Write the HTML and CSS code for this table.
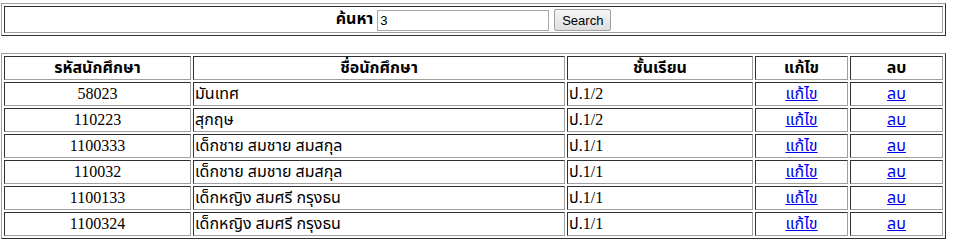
FILE: index.html
```html
<!DOCTYPE html>
<html lang="th">

<head>
  <meta charset="UTF-8">
  <title>ข้อมูลนักศึกษา</title>
  <link rel="stylesheet" href="styles.css">
</head>

<body>
  <form class="search-form">
    <table class="grid search-table">
      <tr>
        <td class="search-cell">
          <b>ค้นหา</b>
          <input type="text" class="search-input" value="3">
          <button type="button" class="search-btn">Search</button>
        </td>
      </tr>
    </table>
  </form>

  <table class="grid student-table">
    <tr>
      <th class="col-id">รหัสนักศึกษา</th>
      <th class="col-name">ชื่อนักศึกษา</th>
      <th class="col-class">ชั้นเรียน</th>
      <th class="col-act">แก้ไข</th>
      <th class="col-act">ลบ</th>
    </tr>
    <tr>
      <td class="center">58023</td>
      <td>มันเทศ</td>
      <td>ป.1/2</td>
      <td class="center"><a href="#">แก้ไข</a></td>
      <td class="center"><a href="#">ลบ</a></td>
    </tr>
    <tr>
      <td class="center">110223</td>
      <td>สุกฤษ</td>
      <td>ป.1/2</td>
      <td class="center"><a href="#">แก้ไข</a></td>
      <td class="center"><a href="#">ลบ</a></td>
    </tr>
    <tr>
      <td class="center">1100333</td>
      <td>เด็กชาย สมชาย สมสกุล</td>
      <td>ป.1/1</td>
      <td class="center"><a href="#">แก้ไข</a></td>
      <td class="center"><a href="#">ลบ</a></td>
    </tr>
    <tr>
      <td class="center">110032</td>
      <td>เด็กชาย สมชาย สมสกุล</td>
      <td>ป.1/1</td>
      <td class="center"><a href="#">แก้ไข</a></td>
      <td class="center"><a href="#">ลบ</a></td>
    </tr>
    <tr>
      <td class="center">1100133</td>
      <td>เด็กหญิง สมศรี กรุงธน</td>
      <td>ป.1/1</td>
      <td class="center"><a href="#">แก้ไข</a></td>
      <td class="center"><a href="#">ลบ</a></td>
    </tr>
    <tr>
      <td class="center">1100324</td>
      <td>เด็กหญิง สมศรี กรุงธน</td>
      <td>ป.1/1</td>
      <td class="center"><a href="#">แก้ไข</a></td>
      <td class="center"><a href="#">ลบ</a></td>
    </tr>
  </table>
</body>

</html>
```

FILE: styles.css
```css
body {
  margin: 0;
  padding: 3px 0 0 1px;
  font-family: "Liberation Serif", "Noto Sans Thai", "Noto Serif Thai", Tahoma, serif;
  font-size: 16px;
  color: #000;
  background: #fff;
}

.search-form {
  margin: 0 0 17px 0;
}

/* old-school border="1" look: outset frame, inset cells */
.grid {
  width: 945px;
  border-collapse: separate;
  border-spacing: 2px;
  border: 1px solid;
  border-color: #a0a0a0 #303030 #303030 #a0a0a0;
  table-layout: fixed;
}

.grid td,
.grid th {
  border: 1px solid;
  border-color: #303030 #a0a0a0 #a0a0a0 #303030;
  padding: 1px;
  line-height: 20px;
  height: 20px;
  white-space: nowrap;
}

.grid th {
  font-weight: bold;
  text-align: center;
}

.search-cell {
  text-align: center;
  height: 22px !important;
  line-height: 22px !important;
}

.search-input {
  width: 166px;
  height: 17px;
  padding: 1px 2px;
  border: 1px solid #a9a9a9;
  font-family: "Liberation Sans", Arial, sans-serif;
  font-size: 13px;
  vertical-align: middle;
}

.search-btn {
  height: 22px;
  width: 57px;
  padding: 0 6px;
  margin-left: 1px;
  font-family: "Liberation Sans", Arial, sans-serif;
  font-size: 13px;
  border: 1px solid #a0a0a0;
  border-radius: 2px;
  background: linear-gradient(#f6f6f6, #dedede);
  vertical-align: middle;
}

/* widths are content widths: cell box minus border and padding */
.col-id {
  width: 183px;
}

.col-name {
  width: 368px;
}

.col-class {
  width: 182px;
}

.col-act {
  width: 89px;
}

.center {
  text-align: center;
}

.grid a {
  color: #0000ee;
  text-decoration: underline;
}
```
